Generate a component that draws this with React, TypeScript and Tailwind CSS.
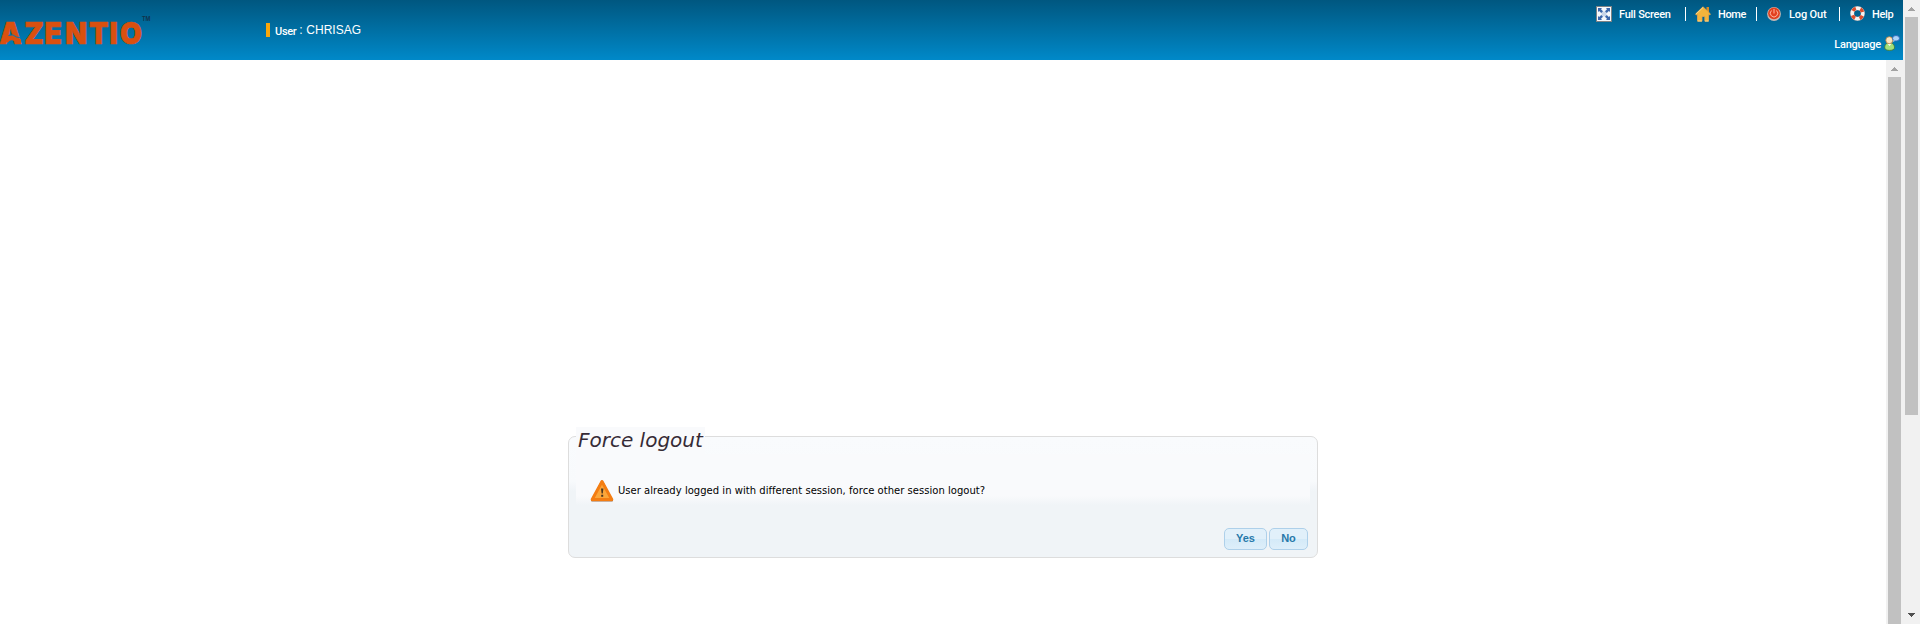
import React from 'react';

function Logo() {
  return (
    <svg className="block h-[60px] w-[156px] shrink-0" viewBox="0 0 156 60" role="img" aria-label="Azentio">
      <text transform="scale(.94 1)" x="-0.8 25.7 47.4 69.3 94.7 116.5 127.8" y="44" fontFamily="Inter, sans-serif" fontWeight="900" fontSize="30" fill="#d9500f" stroke="#d9500f" strokeWidth="0.7">
        AZENTIO
      </text>
      <path d="M6 41.500Q10 36 14 38.700T21 41.500" fill="none" stroke="#d9500f" strokeWidth="4" />
      <path d="M8.500 35.500Q13 33.500 16.500 37L21 38" fill="none" stroke="#0278b3" strokeWidth="1" />
      <text x="142" y="21" fontFamily="Liberation Sans, sans-serif" fontSize="8" fontWeight="700" textLength="8.5" lengthAdjust="spacingAndGlyphs" fill="#10344c">
        TM
      </text>
    </svg>
  );
}

function FullScreenIcon() {
  return (
    <svg className="block h-4 w-4" viewBox="0 0 16 16">
      <rect x=".5" y=".5" width="15" height="15" fill="#f7f9fc" stroke="#7e8284" />
      <rect x="5.500" y="5.500" width="5" height="5" fill="#c9d6ea" />
      <path d="M2 2h4L5 3.200 7 5.200 5.200 7 3.200 5 2 6zM14 2v4l-1.200-1L10.800 7 9 5.200l2-2L10 2zM2 14v-4l1.200 1L5.200 9 7 10.800l-2 2L6 14zM14 14h-4l1-1.200-2-2L10.800 9l2 2L14 10z" fill="#3c68ac" />
    </svg>
  );
}

function HomeIcon() {
  return (
    <svg className="block h-4 w-4" viewBox="0 0 16 16">
      <path d="M11.500 1h2.500v5h-2.500z" fill="#d78a25" />
      <path d="M8 .8 15.500 8l-1 1-1-.6V15.200H9.800V10.500H7V15.200H2.500V8.400L1.500 9 .5 8z" fill="#f3b43c" stroke="#e8a64a" strokeWidth=".8" />
      <path d="M2.800 15h4M10 15h3.500M1 8l7-6.500" fill="none" stroke="#ffe3a0" strokeWidth=".8" />
    </svg>
  );
}

function PowerIcon() {
  return (
    <svg className="block h-[14px] w-[14px]" viewBox="0 0 14 14">
      <circle cx="7" cy="7" r="6.900" fill="#c7b9b4" />
      <circle cx="7" cy="6.300" r="5.900" fill="#e2401f" />
      <path d="M4.500 3.500a3.700 3.700 0 1 0 5 0M7 2v4.500" fill="none" stroke="#ffb9a2" strokeWidth="1" />
    </svg>
  );
}

function HelpIcon() {
  return (
    <svg className="block h-[15px] w-[15px]" viewBox="0 0 15 15">
      <circle cx="7.500" cy="7.500" r="5.300" fill="none" stroke="#8d9aa2" strokeWidth="4.200" />
      <circle cx="7.500" cy="7.500" r="5.300" fill="none" stroke="#f5f3f1" strokeWidth="3.400" />
      <circle cx="7.500" cy="7.500" r="5.300" fill="none" stroke="#dc4d2c" strokeWidth="3.400" strokeDasharray="3.6 4.725" strokeDashoffset="-2.360" />
    </svg>
  );
}

function LanguageIcon() {
  return (
    <svg className="block h-4 w-4" viewBox="0 0 16 16">
      <path d="M.7 13c0-4 2-5 4.800-5s5 1 5 5c0 3.200-9.800 3.200-9.800 0z" fill="#a5e07b" stroke="#3e7a3b" strokeWidth=".9" />
      <path d="M3.500 8.500 5.500 11l2-2.500z" fill="#fff" />
      <circle cx="5.300" cy="5.200" r="3.500" fill="#fbe6c0" stroke="#b77c3b" strokeWidth=".8" />
      <ellipse cx="12" cy="3.300" rx="3.500" ry="2.800" fill="#a9d3fa" stroke="#2c67b8" strokeWidth=".9" />
      <path d="m9.500 5-.7 2 2.500-1.300" fill="#a9d3fa" />
    </svg>
  );
}

function WarningIcon() {
  return (
    <svg className="block h-6 w-6 shrink-0" viewBox="0 0 24 24">
      <path d="M12 2.500 22 21.500H2z" fill="#9c6b47" stroke="#9c6b47" strokeWidth="2" strokeLinejoin="round" />
      <path d="M12 2.500 21.800 20.500H2.200z" fill="#fba63a" stroke="#f47d12" strokeWidth="3" strokeLinejoin="round" />
      <path d="M11 9.500h2.400l-.6 5h-1.200zM11.200 15.800h2v2h-2z" fill="#4a3520" />
    </svg>
  );
}

function Separator() {
  return <span className="mt-[7px] h-[14px] w-px shrink-0 bg-white" />;
}

function Item({ icon, label, gap, text }: { icon: React.ReactNode; label: string; gap: string; text: string }) {
  return (
    <a className={`flex shrink-0 ${gap}`}>
      {icon}
      <span className={`whitespace-nowrap leading-4 ${text}`}>{label}</span>
    </a>
  );
}

function Arrow({ up, fill }: { up?: boolean; fill: string }) {
  return (
    <svg className="block h-[4px] w-[7px]" viewBox="0 0 7 4">
      <path d={up ? 'M3 0h1v1h1v1h1v1h1v1H0V3h1V2h1V1h1z' : 'M0 0h7v1H6v1H5v1H4v1H3V3H2V2H1V1H0z'} fill={fill} />
    </svg>
  );
}

function Header() {
  return (
    <header className="flex h-[60px] bg-gradient-to-b from-[#005780] to-[#0089c9] font-[Roboto,sans-serif] text-[11px] font-medium text-white">
      <Logo />
      <div className="ml-[110px] mt-[23px] flex h-[14px] w-[120px]">
        <span className="h-[14px] w-1 bg-[#f9a60a]" />
        <span className="ml-[5px] mt-[2px] leading-[14px] tracking-[-0.3px]">User</span>
        <span className="ml-[3px] whitespace-nowrap text-[12px] font-normal leading-[14px]">:</span>
        <span className="ml-[4px] whitespace-nowrap font-['Liberation_Sans',Arial,sans-serif] text-[12px] font-normal leading-[14px]">
          CHRISAG
        </span>
      </div>
      <div className="ml-auto flex w-[307px] flex-col">
        <nav className="flex h-[34px]">
          <div className="mt-[6px] w-[89px]">
            <Item icon={<FullScreenIcon />} label="Full Screen" gap="gap-[7px]" text="mt-px tracking-[-0.25px]" />
          </div>
          <Separator />
          <div className="ml-[9px] mt-[6px] w-[61px]">
            <Item icon={<HomeIcon />} label="Home" gap="gap-[7px]" text="mt-px tracking-[-0.35px]" />
          </div>
          <Separator />
          <div className="ml-[10px] mt-[7px] w-[72px]">
            <Item icon={<PowerIcon />} label="Log Out" gap="gap-[8px]" text="tracking-[-0.15px]" />
          </div>
          <Separator />
          <div className="ml-[10px] mt-[6px]">
            <Item icon={<HelpIcon />} label="Help" gap="gap-[7px]" text="mt-px tracking-[-0.3px]" />
          </div>
        </nav>
        <div className="flex justify-end gap-[3px] pr-[3px]">
          <span className="mt-[3px] leading-4 tracking-[-0.2px]">Language</span>
          <span className="mt-px">
            <LanguageIcon />
          </span>
        </div>
      </div>
    </header>
  );
}

function DialogButton({ label, width }: { label: string; width: string }) {
  return (
    <button className={`h-[22px] rounded-[5px] border border-[#aed0ea] bg-[linear-gradient(#e1f0fa_0%,#e1f0fa_50%,#d4eaf8_51%,#deeffa_100%)] pb-[2px] font-['Liberation_Sans',Arial,sans-serif] text-[11px] font-bold leading-[18px] text-[#2779aa] ${width}`}>
      {label}
    </button>
  );
}

function ForceLogout() {
  return (
    <section className="ml-[568px] mt-[376px] flex h-[122px] w-[750px] flex-col rounded-[7px] border border-[#dddddd] bg-[linear-gradient(#f9fbfd_0px,#f8fafc_44px,#f0f4f7_54px,#f0f4f7_100%)] px-[7px] font-['DejaVu_Sans',Verdana,sans-serif]">
      <h1 className="-mt-[10px] h-[27px] w-[129px] whitespace-nowrap bg-[#f9fafc] pl-[2px] text-[20px] italic leading-[27px] text-[#362b36]">
        Force logout
      </h1>
      <div className="flex h-[51px] items-end bg-[linear-gradient(#f9fafc_0px,#f9fafc_42px,#f0f4f7_51px)] pb-[2px] pl-[14px]">
        <WarningIcon />
        <p className="mb-[5px] ml-[4px] whitespace-nowrap text-[10px] leading-[14px] tracking-[0.03px] text-black">
          User already logged in with different session, force other session logout?
        </p>
      </div>
      <div className="mt-[23px] flex justify-end gap-[2px] pr-[2px]">
        <DialogButton label="Yes" width="w-[43px]" />
        <DialogButton label="No" width="w-[39px]" />
      </div>
    </section>
  );
}

export default function App() {
  return (
    <div className="flex h-[624px] w-[1920px] overflow-hidden bg-white">
      <div className="flex w-[1903px] flex-col">
        <Header />
        <main className="flex h-[564px]">
          <div className="w-[1886px]">
            <ForceLogout />
          </div>
          <div className="flex w-[17px] flex-col items-center bg-[#f1f1f1] pt-[7px]">
            <Arrow up fill="#a3a3a3" />
            <div className="mt-[6px] w-[13px] grow bg-[#c1c1c1]" />
          </div>
        </main>
      </div>
      <div className="flex w-[17px] flex-col items-center bg-[#f1f1f1] pt-[7px]">
        <Arrow up fill="#a3a3a3" />
        <div className="mt-[6px] h-[398px] w-[13px] shrink-0 bg-[#c1c1c1]" />
        <div className="mb-[7px] mt-auto">
          <Arrow fill="#505050" />
        </div>
      </div>
    </div>
  );
}
